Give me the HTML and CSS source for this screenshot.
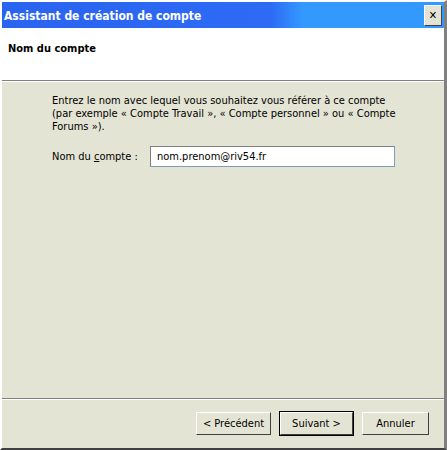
FILE: index.html
```html
<!DOCTYPE html>
<html lang="fr">
<head>
  <meta charset="UTF-8">
  <title>Assistant de création de compte</title>
  <link rel="stylesheet" href="styles.css">
</head>
<body>
  <div class="window">
    <!-- Barre de titre -->
    <div class="titlebar">
      <span class="title">Assistant de création de compte</span>
      <span class="close">&#x2715;</span>
    </div>

    <!-- En-tête blanc -->
    <div class="header">
      <h1>Nom du compte</h1>
    </div>

    <!-- Contenu -->
    <div class="content">
      <p class="intro">Entrez le nom avec lequel vous souhaitez vous référer à ce compte<br>
        (par exemple « Compte Travail », « Compte personnel » ou « Compte<br>
        Forums »).</p>
      <div class="field">
        <label for="account">Nom du <u>c</u>ompte :</label>
        <input type="text" id="account" value="nom.prenom@riv54.fr">
      </div>
    </div>

    <!-- Boutons -->
    <div class="footer">
      <button class="button">&lt; Précédent</button>
      <button class="button default">Suivant &gt;</button>
      <button class="button cancel">Annuler</button>
    </div>
  </div>
</body>
</html>
```
FILE: styles.css
```css
body {
  margin: 0;
  background: #fff;
  font-family: Tahoma, 'DejaVu Sans Condensed', 'DejaVu Sans', sans-serif;
  font-size: 11px;
}
.window {
  width: 447px;
  height: 450px;
  box-sizing: border-box;
  border-top: 2px solid #fff;
  border-left: 2px solid #fff;
  border-right: 3px solid #808080;
  border-bottom: 2px solid #404040;
  display: flex;
  flex-direction: column;
  background: #e4e4d4;
}
.titlebar {
  height: 26px;
  background: linear-gradient(to right, #2a63f0 0%, #2d6bf5 61%, #3399ff 68%, #3399ff 100%);
  display: flex;
  align-items: center;
  justify-content: space-between;
  padding: 0 2px 0 2px;
}
.title {
  color: #fff;
  font-weight: bold;
  font-size: 12px;
  margin-top: 1px;
}
.close {
  width: 16px;
  height: 19px;
  background: #e4e4d4;
  border-top: 1px solid #fff;
  border-left: 1px solid #fff;
  border-right: 1px solid #404040;
  border-bottom: 1px solid #404040;
  color: #000;
  font-size: 11px;
  font-weight: bold;
  display: flex;
  align-items: center;
  justify-content: center;
}
.header {
  height: 52px;
  background: #fff;
  border-bottom: 1px solid #808080;
  box-shadow: 0 1px 0 #fff;
  padding: 0 6px;
}
.header h1 {
  margin: 14px 0 0;
  font-size: 11px;
  font-weight: bold;
}
.content {
  flex: 1;
  padding: 13px 0 0 50px;
}
.intro {
  margin: 0;
  line-height: 13px;
  color: #000;
  white-space: nowrap;
}
.field {
  display: flex;
  align-items: center;
  margin-top: 13px;
}
.field label {
  width: 98px;
}
.field input {
  width: 245px;
  height: 21px;
  box-sizing: border-box;
  border: 1px solid #7f9db9;
  border-top-color: #808080;
  border-left-color: #808080;
  font: inherit;
  padding: 0 6px;
}
.footer {
  height: 48px;
  border-top: 1px solid #808080;
  box-shadow: inset 0 1px 0 #fff;
  display: flex;
  justify-content: flex-end;
  align-items: center;
  gap: 9px;
  padding: 0 15px 1px 0;
}
.button {
  font: inherit;
  white-space: nowrap;
  padding: 0;
  width: 75px;
  height: 23px;
  background: #e4e4d4;
  border: 1px solid;
  border-color: #fff #404040 #404040 #fff;
  color: #000;
}
.default {
  width: 73px;
  outline: 1px solid #000;
}
.cancel {
  width: 67px;
}
```
